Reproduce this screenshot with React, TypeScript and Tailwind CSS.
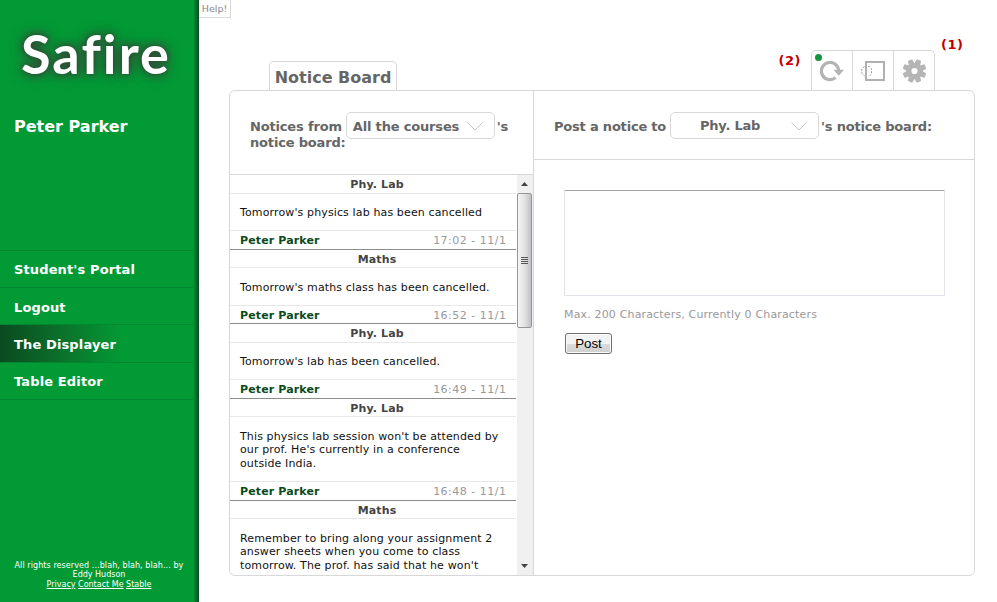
const notices = [
  { course: "Phy. Lab", lines: ["Tomorrow's physics lab has been cancelled"], time: "17:02 - 11/1", head: "h-[19px] pt-px", body: "h-[37px]", foot: "h-[19px] pt-px" },
  { course: "Maths", lines: ["Tomorrow's maths class has been cancelled."], time: "16:52 - 11/1", head: "h-[18px] pt-[2px]", body: "h-[38px]", foot: "h-[18px] pt-[2px]" },
  { course: "Phy. Lab", lines: ["Tomorrow's lab has been cancelled."], time: "16:49 - 11/1", head: "h-[19px] pt-px", body: "h-[37px]", foot: "h-[19px] pt-px" },
  {
    course: "Phy. Lab",
    lines: ["This physics lab session won't be attended by", "our prof. He's currently in a conference", "outside India."],
    time: "16:48 - 11/1", head: "h-[18px] pt-[2px]", body: "h-[65px]", foot: "h-[19px] pt-px",
  },
  {
    course: "Maths",
    lines: ["Remember to bring along your assignment 2", "answer sheets when you come to class", "tomorrow. The prof. has said that he won't"],
    time: "", head: "h-[18px] pt-[2px]", body: "h-[65px]", foot: "h-[19px] pt-px",
  },
];

const menu = [
  { label: "Student's Portal", cls: "h-[37px] pt-[2px]" },
  { label: "Logout", cls: "h-[37px] pt-[4px]" },
  { label: "The Displayer", cls: "h-[38px] pt-[2px] bg-linear-to-r from-[#0b4a20] to-[#029a35] to-[122px]" },
  { label: "Table Editor", cls: "h-[37px] pt-[2px]" },
];

function Select({ label }: { label: string }) {
  return (
    <div className="flex h-[27px] w-[149px] shrink-0 items-center rounded-[5px] border border-[#d8d8d8] pl-[6px]">
      <span className="w-[106px] pt-[2px] text-center">{label}</span>
      <svg className="mt-[2px] ml-[8px]" width="16" height="9" viewBox="0 0 16 9" fill="none" stroke="#c8c8c8">
        <path d="M0.5 0.5L8 8L15.5 0.5" />
      </svg>
    </div>
  );
}

function Sidebar() {
  return (
    <aside className="flex h-full w-[199px] shrink-0 bg-[#029a35] text-white">
      <div className="flex w-[193px] flex-col">
        <div className="h-[107px] pt-[19px] pl-[21px] font-['Lato'] text-[54px] leading-[70px] font-bold tracking-[2.1px] whitespace-nowrap [font-variant-ligatures:none] [text-shadow:0_0_2px_#24522f,0_0_8px_#343f36,0_0_14px_#40483f]">
          Safire
        </div>
        <h1 className="h-[143px] pl-[14px] text-[16px] leading-[40px] font-bold">Peter Parker</h1>
        <nav className="border-t border-[#04852f]">
          {menu.map((m) => (
            <div key={m.label} className={`flex items-center border-b border-[#04852f] pl-[14px] text-[13px] font-bold tracking-[0.13px] ${m.cls}`}>
              {m.label}
            </div>
          ))}
        </nav>
        <footer className="mt-auto mb-[13px] ml-[5px] text-center text-[8px] leading-[9.5px] whitespace-nowrap">
          <span className="tracking-[0.08px]">All rights reserved ...blah, blah, blah... by</span>
          <br />
          Eddy Hudson
          <br />
          <u>Privacy</u> <u>Contact Me</u> <u>Stable</u>
        </footer>
      </div>
      <div className="w-[6px] bg-linear-to-r from-[#029a35] to-[#0a4a20]" />
    </aside>
  );
}

function Toolbar() {
  return (
    <div className="flex h-[40px] w-[124px] rounded-t-[5px] border border-b-0 border-[#d8d8d8]">
      <div className="relative flex w-[41px] items-center justify-center border-r border-[#d8d8d8]">
        <span className="absolute top-[3px] left-[3px] size-[7px] rounded-full bg-[#149440]" />
        <svg width="24" height="24" viewBox="0 0 24 24" fill="none">
          <path d="M15.6 18.6A8.6 8.6 0 1 1 18.6 11.5" stroke="#b3b3b3" strokeWidth="3.2" />
          <path d="M13.4 10.8H24L18.8 16.8Z" fill="#b3b3b3" />
        </svg>
      </div>
      <div className="flex w-[41px] items-center justify-center border-r border-[#d8d8d8]">
        <svg width="24" height="20" viewBox="0 0 24 20" fill="none" stroke="#b0b0b0">
          <rect x="5" y="1" width="18" height="18" strokeWidth="2" />
          <path d="M7 5.5H8.5L10.5 7.5V13L8.5 15H7M3.5 5.5L0.8 8V12.5L3.5 15" stroke="#999" strokeDasharray="2 1.5" />
        </svg>
      </div>
      <div className="flex flex-1 items-center justify-center">
        <svg width="24" height="24" viewBox="-12.5 -12 24 24">
          <g fill="#b5b5b5">
            {[22.5, 67.5, 112.5, 157.5, 202.5, 247.5, 292.5, 337.5].map((a) => (
              <path key={a} d="M6 -3.2L11.8 -2.3V2.3L6 3.2Z" transform={`rotate(${a})`} />
            ))}
          </g>
          <circle r="5.6" fill="none" stroke="#b5b5b5" strokeWidth="5" />
        </svg>
      </div>
    </div>
  );
}

function Scrollbar() {
  return (
    <div className="flex w-[16px] shrink-0 flex-col items-start bg-[#f0f0f0]">
      <div className="flex h-[18px] items-center pl-[4px]">
        <svg width="7" height="4" viewBox="0 0 7 4"><path d="M0 4L3.5 0L7 4Z" fill="#444" /></svg>
      </div>
      <div className="flex h-[135px] w-[15px] flex-col items-center justify-center gap-px rounded-[2px] border border-[#979797] bg-linear-to-r from-[#f5f5f5] via-[#e3e3e5] to-[#c0c0c4] pr-px pb-px">
        {[0, 1, 2, 3].map((n) => <span key={n} className="h-px w-[7px] bg-[#555]" />)}
      </div>
      <div className="mt-auto flex h-[18px] items-center pl-[4px]">
        <svg width="7" height="4" viewBox="0 0 7 4"><path d="M0 0L3.5 4L7 0Z" fill="#444" /></svg>
      </div>
    </div>
  );
}

export default function App() {
  return (
    <div className="flex h-[602px] w-[997px] overflow-hidden bg-white font-['DejaVu_Sans',sans-serif] whitespace-nowrap">
      <Sidebar />
      <main className="flex flex-1 flex-col">
        <div className="h-[18px] w-[32px] border-r border-b border-[#d8d8d8] text-center text-[9.5px] leading-[17px] text-[#888]">Help!</div>
        <div className="flex h-[72px] items-end pl-[70px]">
          <div className="flex h-[29px] w-[128px] items-center justify-center rounded-t-[5px] border border-b-0 border-[#d8d8d8] pt-[3px] text-[16px] font-bold text-[#666]">
            Notice Board
          </div>
          <div className="ml-auto self-start pt-[35px] pr-[10px] text-[13px] leading-[16px] font-bold tracking-[0.5px] text-[#c00000]">(2)</div>
          <Toolbar />
          <div className="w-[62px] self-start pt-[19px] pl-[6px] text-[13px] leading-[16px] font-bold tracking-[0.5px] text-[#c00000]">(1)</div>
        </div>
        <div className="ml-[30px] flex h-[486px] w-[746px] overflow-hidden rounded-[6px] border border-[#d8d8d8]">
          <section className="flex w-[304px] flex-col border-r border-[#d8d8d8]">
            <div className="h-[84px] border-b border-[#d8d8d8] pt-[21px] pl-[20px] text-[13px] font-bold tracking-[-0.17px] text-[#666]">
              <div className="flex h-[23px] items-start">
                <span className="mr-[4px] leading-[29px]">Notices from</span>
                <Select label="All the courses" />
                <span className="ml-[2px] leading-[29px]">'s</span>
              </div>
              <div className="leading-[16px]">notice board:</div>
            </div>
            <div className="flex min-h-0 flex-1">
              <div className="w-[286px] overflow-hidden text-[11px] leading-[13.5px]">
                {notices.map((n, i) => (
                  <article key={i} className="w-[286px]">
                    <h2 className={`flex items-center justify-center border-b border-[#e8e8e8] pl-[8px] font-bold tracking-[0.13px] text-[#444] ${n.head}`}>{n.course}</h2>
                    <div className={`flex flex-col justify-center border-b border-[#e8e8e8] pt-[2px] pl-[10px] tracking-[0.13px] text-[#111] ${n.body}`}>
                      {n.lines.map((l) => <p key={l}>{l}</p>)}
                    </div>
                    {n.time && (
                      <div className={`flex items-center justify-between border-b border-[#8c8c8c] pr-[10px] pl-[10px] ${n.foot}`}>
                        <b className="tracking-[0.13px] text-[#0c4a20]">Peter Parker</b>
                        <span className="-mr-[0.5px] tracking-[0.5px] text-[#999]">{n.time}</span>
                      </div>
                    )}
                  </article>
                ))}
              </div>
              <div className="ml-px flex">
                <Scrollbar />
              </div>
            </div>
          </section>
          <section className="flex-1">
            <div className="flex h-[69px] items-center border-b border-[#d8d8d8] pl-[20px] text-[13px] font-bold tracking-[-0.2px] text-[#666]">
              <span className="mr-[4px] pt-[3px]">Post a notice to</span>
              <Select label="Phy. Lab" />
              <span className="ml-[2px] pt-[3px]">'s notice board:</span>
            </div>
            <div className="flex flex-col items-start pt-[30px] pl-[30px]">
              <textarea className="h-[106px] w-[381px] resize-none rounded-[1px] border border-[#e2e3ea] border-t-[#a5a5a8]" />
              <p className="mt-[11px] text-[11px] leading-[16px] tracking-[0.16px] text-[#999]">Max. 200 Characters, Currently 0 Characters</p>
              <button className="mt-[10px] ml-px h-[21px] w-[47px] rounded-[3px] border border-[#707070] bg-linear-to-b from-[#f2f2f2] from-50% via-[#dddddd] via-50% to-[#cfcfcf] font-['Liberation_Sans'] text-[13.33px] leading-[17px] shadow-[inset_0_0_0_1px_#fafafa]">
                Post
              </button>
            </div>
          </section>
        </div>
      </main>
    </div>
  );
}
